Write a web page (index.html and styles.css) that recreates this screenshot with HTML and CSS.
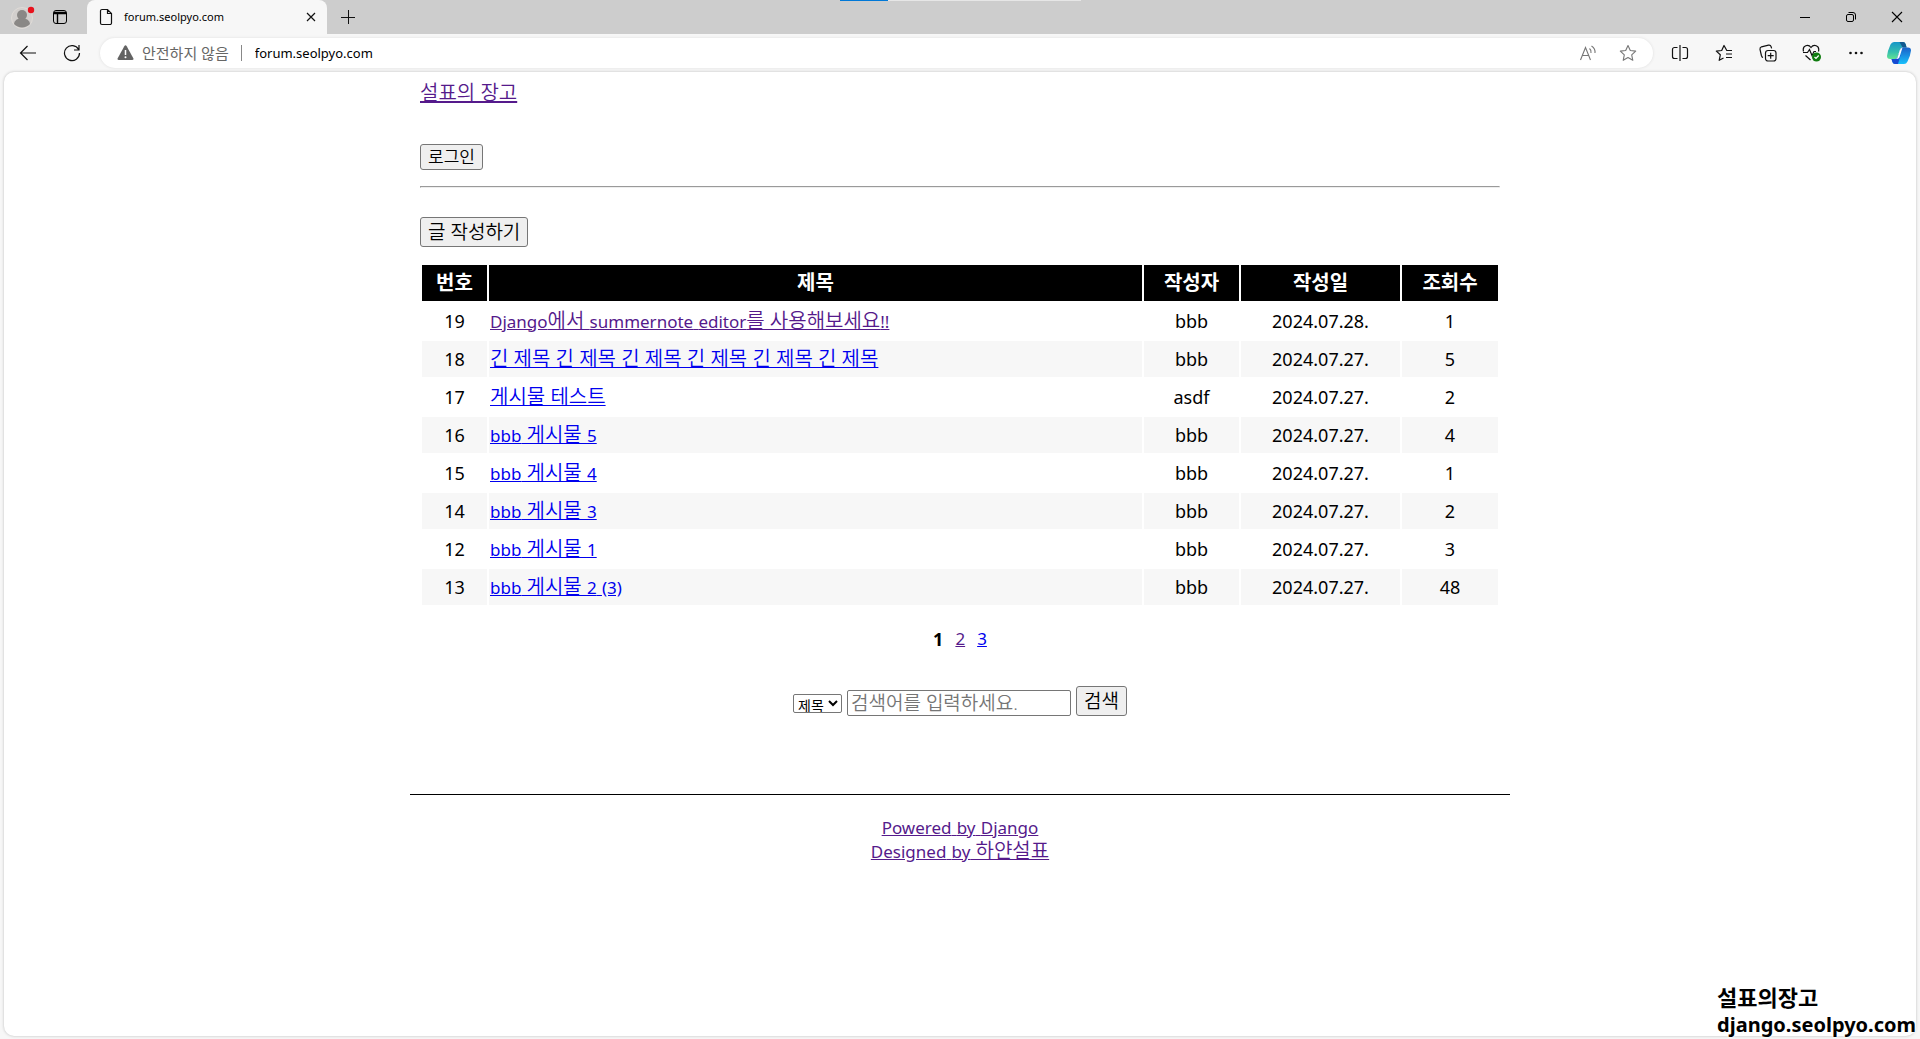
FILE: index.html
```html
<!DOCTYPE html>
<html lang="ko">
<head>
<meta charset="utf-8">
<title>forum.seolpyo.com</title>
<link rel="stylesheet" href="styles.css">
</head>
<body>
<header class="browser">
  <div class="tabstrip">
    <button class="profile" aria-label="프로필"><svg width="26" height="26" viewBox="0 0 26 26"><circle cx="13" cy="14" r="10.5" fill="#d2cfcd" stroke="#e0dcd8"/><circle cx="13" cy="11" r="5" fill="#8a8886"/><path d="M5 20a8 6 0 0 1 16 0a11 11 0 0 1-16 0z" fill="#8a8886"/><circle cx="22" cy="6" r="3.2" fill="#e8121d"/></svg></button>
    <button class="workspace" aria-label="탭 작업"><svg width="16" height="16" viewBox="0 0 16 16" fill="none" stroke="#000"><rect x="1.5" y="1.5" width="13" height="13" rx="2.5"/><path d="M2 3.5h12M2 4.5h12M5.5 5v9" stroke-width="1.4"/></svg></button>
    <div class="tab">
      <svg width="14" height="18" viewBox="0 0 14 18" fill="none" stroke="#111" stroke-width="1.2"><path d="M3 1.5h5.5l4 4V15a1.5 1.5 0 0 1-1.5 1.5H3A1.5 1.5 0 0 1 1.5 15V3A1.5 1.5 0 0 1 3 1.5zM8.500 1.500V5.500h4"/></svg>
      <span class="tab-title">forum.seolpyo.com</span>
      <button class="tab-close" aria-label="탭 닫기"><svg width="10" height="10" viewBox="0 0 10 10" stroke="#111" stroke-width="1.2"><path d="M1 1l8 8M9 1l-8 8"/></svg></button>
    </div>
    <button class="new-tab" aria-label="새 탭"><svg width="16" height="16" viewBox="0 0 16 16" stroke="#111"><path d="M1 8.500h14M8.500 1v14"/></svg></button>
    <div class="window-buttons">
      <button aria-label="최소화"><svg width="12" height="12" viewBox="0 0 12 12" stroke="#000"><path d="M1 6.500h10"/></svg></button>
      <button aria-label="이전 크기로"><svg width="12" height="12" viewBox="0 0 12 12" fill="none" stroke="#000"><rect x="1.500" y="3.500" width="7" height="7" rx="1.500"/><path d="M3.500 1.500H8a2.500 2.500 0 0 1 2.500 2.500v4.500"/></svg></button>
      <button aria-label="닫기"><svg width="12" height="12" viewBox="0 0 12 12" stroke="#000" stroke-width="1.100"><path d="M1 1l10 10M11 1L1 11"/></svg></button>
    </div>
    <div class="drag-bar"><i></i></div>
  </div>
  <div class="toolbar">
    <button aria-label="뒤로"><svg width="18" height="18" viewBox="0 0 18 18" fill="none" stroke="#111" stroke-width="1.200"><path d="M17 9H1.500M8.500 2L1.500 9l7 7"/></svg></button>
    <button aria-label="새로 고침"><svg width="18" height="18" viewBox="0 0 18 18" fill="none" stroke="#111" stroke-width="1.200"><path d="M15.600 5.500A7.500 7.500 0 1 0 16.500 9M16 1v5h-5"/></svg></button>
    <div class="address">
      <svg width="17" height="16" viewBox="0 0 17 16"><path d="M7.300 1.200q1.200-1.800 2.400 0l6.600 12q.8 1.800-1.200 1.800H1.900q-2 0-1.200-1.800z" fill="#636363"/><path d="M8.500 5v5" stroke="#fff" stroke-width="1.500"/><circle cx="8.500" cy="12.200" r="1" fill="#fff"/></svg>
      <span class="warning">안전하지 않음</span>
      <input class="url" aria-label="주소" value="forum.seolpyo.com">
      <button aria-label="소리내어 읽기"><svg width="18" height="18" viewBox="0 0 18 18" fill="none" stroke="#777" stroke-width="1.100"><path d="M1.500 16L6.500 3.500 11.500 16M3.200 11.500h6.600M10.500 4.500q2 1.500 1.500 4.500M12.500 2q4 2.500 3.500 7"/></svg></button>
      <button aria-label="즐겨찾기에 추가"><svg width="18" height="18" viewBox="0 0 18 18" fill="none" stroke="#777" stroke-width="1.100" stroke-linejoin="round"><path d="M9 1.500l2.300 5 5.400.6-4 3.700 1.100 5.500L9 13.600l-4.800 2.700 1.100-5.500-4-3.700 5.400-.6z"/></svg></button>
    </div>
    <div class="tools">
      <button aria-label="화면 분할"><svg width="18" height="18" viewBox="0 0 18 18" fill="none" stroke="#111" stroke-width="1.200"><path d="M6.500 3.500h-3a2 2 0 0 0-2 2v7a2 2 0 0 0 2 2h3M11.500 3.500h3a2 2 0 0 1 2 2v7a2 2 0 0 1-2 2h-3M9 1v16"/></svg></button>
      <button aria-label="즐겨찾기"><svg width="18" height="18" viewBox="0 0 18 18" fill="none" stroke="#111" stroke-width="1.200" stroke-linejoin="round"><path d="M17 6.500h-5.200L9 1.500 6.700 6.500l-5.400.6 4 3.700-1.100 5.500 4.300-2.300M11 10h6M11 13.500h6"/></svg></button>
      <button aria-label="컬렉션"><svg width="18" height="18" viewBox="0 0 18 18" fill="none" stroke="#111" stroke-width="1.200"><rect x="6.500" y="6.500" width="10.500" height="10.500" rx="2.500"/><path d="M11.700 8.700v6M8.700 11.700h6M4 13.500q-1-.2-1.600-2L1 5.500q-.3-2 1.500-2.700l7-1.700q2-.4 2.600 1.500l.5 1.700"/></svg></button>
      <button aria-label="브라우저 필수 기능"><svg width="20" height="18" viewBox="0 0 20 18" fill="none" stroke="#111" stroke-width="1.200"><path d="M1.500 7.500C0 1 6.500 0 9 3.500 11.500 0 18 1 16.500 7.500M1 8.500h4.500l2-3 2.500 6 2-4h2M3.500 11.500L8.500 16"/><circle cx="14.500" cy="13" r="4.500" fill="#107c10" stroke="none"/><path d="M12.500 13l1.500 1.500 2.700-3" stroke="#fff"/></svg></button>
      <button aria-label="설정 및 기타"><svg width="18" height="18" viewBox="0 0 18 18" fill="#111"><circle cx="3.500" cy="9" r="1.300"/><circle cx="9" cy="9" r="1.300"/><circle cx="14.500" cy="9" r="1.300"/></svg></button>
      <button class="copilot" aria-label="Copilot"><svg width="24" height="24" viewBox="0 0 24 24"><defs><linearGradient id="cg" x1="0" y1="0" x2="0" y2="1"><stop stop-color="#1596c8"/><stop offset=".6" stop-color="#35bfae"/><stop offset="1" stop-color="#62e391"/></linearGradient><linearGradient id="cb" x1="0" y1="0" x2="0" y2="1"><stop stop-color="#1b60c8"/><stop offset="1" stop-color="#18c0fb"/></linearGradient></defs><path d="M7 1h9q2 0 2.600 2l1 3.500h-4q-2 0-2.600 2L10.500 16q-.7 2-2.500 2H3q-3 0-3-3 .5-5 3.500-11.500Q4.700 1 7 1z" fill="url(#cg)"/><path d="M12.500 1H16q2 0 2.600 2l1 3.500h-4z" fill="#12588f"/><path d="M17 23H8q-2 0-2.600-2L4.500 18H8q2 0 2.600-2L13 8.500q.7-2 2.500-2H21q3 0 3 3-.5 5-3.500 11Q19.300 23 17 23z" fill="url(#cb)"/><path d="M11 23H8q-2 0-2.600-2L4.500 18H8q2 0 2.600-2l1-3 2 1z" fill="#1749d2"/><path d="M12.500 10q.8-3 3-3.500l-3.200 10.200Q11.500 18 9 18q1.500-.7 2-3z" fill="#fff"/></svg></button>
    </div>
  </div>
</header>
<div class="page">
  <div class="container">
    <a class="home visited ko" href="#">설표의 장고</a>
    <div><button class="btn login">로그인</button></div>
    <hr>
    <button class="btn write">글 작성하기</button>
    <table>
      <colgroup><col class="c-no"><col><col class="c-author"><col class="c-date"><col class="c-hits"></colgroup>
      <thead><tr><th>번호</th><th>제목</th><th>작성자</th><th>작성일</th><th>조회수</th></tr></thead>
      <tbody>
        <tr><td>19</td><td><a class="visited" href="#">Django<span class="ko">에서 </span>summernote<span class="ko"> </span>editor<span class="ko">를 사용해보세요</span>!!</a></td><td>bbb</td><td>2024.07.28.</td><td>1</td></tr>
        <tr><td>18</td><td><a href="#"><span class="ko">긴 제목 긴 제목 긴 제목 긴 제목 긴 제목 긴 제목</span></a></td><td>bbb</td><td>2024.07.27.</td><td>5</td></tr>
        <tr><td>17</td><td><a href="#"><span class="ko">게시물 테스트</span></a></td><td>asdf</td><td>2024.07.27.</td><td>2</td></tr>
        <tr><td>16</td><td><a href="#">bbb<span class="ko"> 게시물 </span>5</a></td><td>bbb</td><td>2024.07.27.</td><td>4</td></tr>
        <tr><td>15</td><td><a href="#">bbb<span class="ko"> 게시물 </span>4</a></td><td>bbb</td><td>2024.07.27.</td><td>1</td></tr>
        <tr><td>14</td><td><a href="#">bbb<span class="ko"> 게시물 </span>3</a></td><td>bbb</td><td>2024.07.27.</td><td>2</td></tr>
        <tr><td>12</td><td><a href="#">bbb<span class="ko"> 게시물 </span>1</a></td><td>bbb</td><td>2024.07.27.</td><td>3</td></tr>
        <tr><td>13</td><td><a href="#">bbb<span class="ko"> 게시물 </span>2<span class="ko"> </span>(3)</a></td><td>bbb</td><td>2024.07.27.</td><td>48</td></tr>
      </tbody>
    </table>
    <nav class="pages"><b>1</b><a class="visited" href="#">2</a><a href="#">3</a></nav>
    <form class="search">
      <select aria-label="검색 범위"><option>제목</option></select>
      <input type="text" aria-label="검색어" placeholder="검색어를 입력하세요.">
      <button class="btn find" type="button">검색</button>
    </form>
  </div>
  <footer>
    <a class="visited" href="#">Powered<span class="ko"> </span>by<span class="ko"> </span>Django</a>
    <a class="visited" href="#">Designed<span class="ko"> </span>by<span class="ko"> 하얀설표</span></a>
  </footer>
</div>
<div class="watermark"><span class="mark-name">설표의장고</span><span>django.seolpyo.com</span></div>
</body>
</html>
```
FILE: styles.css
```css
* { box-sizing: border-box; }
body {
  margin: 0;
  min-height: 100vh;
  display: flex;
  flex-direction: column;
  background: #f7f7f7;
  color: #000;
  font-family: "Noto Sans", "Noto Sans CJK KR", sans-serif;
  font-size: 18px;
}
button, input, select { font-family: inherit; }
svg { display: block; flex: none; }

/* browser frame */
.browser button {
  border: 0;
  padding: 0;
  background: none;
  display: flex;
  align-items: center;
  justify-content: center;
}
.tabstrip {
  position: relative;
  height: 34px;
  display: flex;
  align-items: center;
  background: #cdcdcd;
}
.profile { width: 44px; }
.workspace { width: 32px; }
.tab {
  width: 240px;
  height: 34px;
  margin-left: 11px;
  padding: 0 11px 0 12px;
  display: flex;
  align-items: center;
  background: #f7f7f7;
  border-radius: 8px 8px 0 0;
}
.tab-title { flex: 1; margin-left: 11px; font-size: 11px; line-height: 18px; }
.new-tab { width: 42px; }
.window-buttons { display: flex; margin-left: auto; }
.window-buttons button { width: 46px; height: 34px; }
.drag-bar {
  position: absolute;
  top: 0;
  left: 50%;
  width: 241px;
  height: 1px;
  margin-left: -120px;
  background: #e6e6e6;
}
.drag-bar i { display: block; width: 48px; height: 1px; background: #0078d7; }
.toolbar { height: 38px; display: flex; align-items: center; padding-left: 6px; }
.toolbar > button { width: 44px; }
.address {
  flex: 1;
  height: 30px;
  margin-left: 6px;
  padding: 0 5px 0 17px;
  display: flex;
  align-items: center;
  background: #fff;
  border-radius: 15px;
  box-shadow: 0 0 3px #ddd;
}
.address button { width: 40px; }
.warning {
  margin-left: 8px;
  padding-right: 12px;
  border-right: 1px solid #888;
  color: #666;
  font-size: 15px;
  line-height: 16px;
}
.url {
  flex: 1;
  border: 0;
  padding: 0 0 0 13px;
  background: none;
  font-size: 13px;
}
.tools { display: flex; padding-left: 5px; }
.tools button { width: 44px; }
.tools .copilot { width: 42px; }

/* forum */
.page {
  flex: 1;
  margin: 0 4px 3px;
  background: #fff;
  border-radius: 10px;
  box-shadow: 0 0 3px #bbb;
}
.container { max-width: 1100px; margin: 0 auto; padding: 8px 10px 0; }
a { color: #00e; font-size: 17px; }
a.visited { color: #551a8b; }
.ko, a.ko { font-size: 20px; font-weight: 350; line-height: 1; }
a.home { display: block; width: fit-content; line-height: 26px; margin-bottom: 38px; }
.btn {
  display: block;
  padding: 0 7px;
  border: 1px solid #767676;
  border-radius: 3px;
  background: #efefef;
  color: #000;
  font-size: 19px;
  font-weight: 350;
  line-height: 28px;
}
.login { font-size: 17px; line-height: 24px; }
hr { margin: 16px 0 29px; }
table {
  width: 100%;
  margin-top: 16px;
  table-layout: fixed;
  border-spacing: 2px;
}
.c-no { width: 65px; }
.c-author { width: 95px; }
.c-date { width: 159px; }
.c-hits { width: 96px; }
th, td { height: 36px; padding: 0 1px; text-align: center; line-height: 26px; }
th { background: #000; color: #fff; font-size: 20px; }
td:nth-child(2) { text-align: left; white-space: nowrap; }
tbody tr:nth-child(even) td { background: #f7f7f7; }
.pages {
  display: flex;
  justify-content: center;
  gap: 12px;
  margin-top: 18px;
  line-height: 28px;
}
.search {
  display: flex;
  justify-content: center;
  align-items: flex-end;
  gap: 5px;
  margin-top: 33px;
}
.search select {
  width: 49px;
  height: 19px;
  margin-bottom: 3px;
  padding: 0;
  border: 1px solid #767676;
  border-radius: 2px;
  background: #fff;
  font-size: 14px;
  line-height: 16px;
}
.search input {
  width: 224px;
  height: 26px;
  padding: 0 3px;
  border: 1px solid #767676;
  border-radius: 2px;
  font-size: 19px;
  font-weight: 350;
}
footer {
  max-width: 1100px;
  margin: 78px auto 0;
  padding-top: 21px;
  border-top: 1px solid #000;
  display: flex;
  flex-direction: column;
  align-items: center;
  line-height: 24px;
}
.watermark {
  position: absolute;
  right: 4px;
  bottom: 0;
  display: flex;
  flex-direction: column;
  font-size: 20px;
  font-weight: 700;
  line-height: 28px;
  text-shadow: 0 0 3px #fff, 0 0 3px #fff, 0 0 3px #fff;
}
.mark-name { font-size: 22px; }
```
